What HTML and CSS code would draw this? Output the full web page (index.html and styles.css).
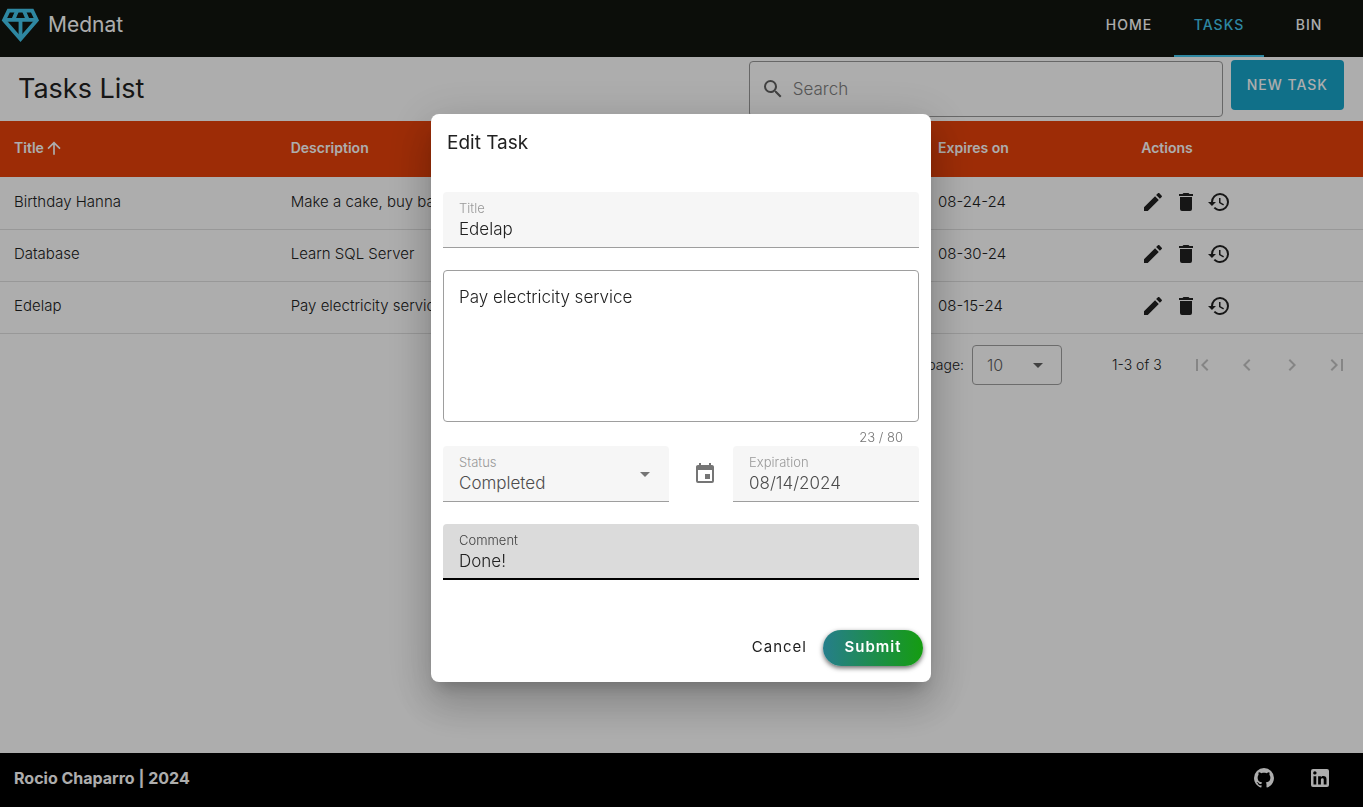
FILE: index.html
```html
<!DOCTYPE html>
<html lang="en">
<head>
<meta charset="utf-8">
<title>Mednat - Tasks</title>
<meta name="viewport" content="width=device-width, initial-scale=1">
<link rel="stylesheet" href="styles.css">
</head>
<body>
<svg class="defs" aria-hidden="true">
  <symbol id="pencil" viewBox="0 0 24 24"><path d="M20.71,7.04C21.1,6.65 21.1,6 20.71,5.63L18.37,3.29C18,2.9 17.35,2.9 16.96,3.29L15.12,5.12L18.87,8.87M3,17.25V21H6.75L17.81,9.93L14.06,6.18L3,17.25Z"/></symbol>
  <symbol id="trash" viewBox="0 0 24 24"><path d="M19,4H15.5L14.5,3H9.5L8.5,4H5V6H19M6,19A2,2 0 0,0 8,21H16A2,2 0 0,0 18,19V7H6V19Z"/></symbol>
  <symbol id="history" viewBox="0 0 24 24"><path d="M13.5,8H12V13L16.28,15.54L17,14.33L13.5,12.25V8M13,3A9,9 0 0,0 4,12H1L4.96,16.03L9,12H6A7,7 0 0,1 13,5A7,7 0 0,1 20,12A7,7 0 0,1 13,19C11.07,19 9.32,18.21 8.06,16.94L6.64,18.36C8.27,20 10.5,21 13,21A9,9 0 0,0 22,12A9,9 0 0,0 13,3"/></symbol>
  <symbol id="caret" viewBox="0 0 24 24"><path d="M7,10L12,15L17,10H7Z"/></symbol>
</svg>

<div class="app">
  <header class="topbar">
    <a class="brand" href="#">
      <svg class="brand-mark" viewBox="0 0 40 40" aria-hidden="true"><g fill="none" stroke="currentColor" stroke-width="3.8"><path d="M8.6 5.7H32.2L36.8 15.2L20.5 34L4 15.2Z"/><path d="M4 14.8H37M20.5 15V34M17 6L13.2 15M24 6L27.8 15"/></g></svg>
      <span>Mednat</span>
    </a>
    <nav class="tabs">
      <a class="tab" href="#home">Home</a>
      <a class="tab active" href="#tasks">Tasks</a>
      <a class="tab" href="#bin">Bin</a>
    </nav>
  </header>

  <main class="content">
    <div class="toolbar">
      <h1 class="page-title">Tasks List</h1>
      <label class="search">
        <svg class="icon" viewBox="0 0 24 24" aria-hidden="true"><path d="M9.5,3A6.5,6.5 0 0,1 16,9.5C16,11.11 15.41,12.59 14.44,13.73L14.71,14H15.5L20.5,19L19,20.5L14,15.5V14.71L13.73,14.44C12.59,15.41 11.11,16 9.5,16A6.5,6.5 0 0,1 3,9.5A6.5,6.5 0 0,1 9.5,3M9.5,5C7,5 5,7 5,9.5C5,12 7,14 9.5,14C12,14 14,12 14,9.5C14,7 12,5 9.5,5Z"/></svg>
        <input class="search-input" type="search" placeholder="Search" aria-label="Search">
      </label>
      <button class="new-task" type="button">New Task</button>
    </div>

    <table class="tasks">
      <thead>
        <tr>
          <th class="col-title"><span class="sort">Title <svg viewBox="0 0 24 24" aria-hidden="true"><path d="M13,20H11V8L5.5,13.5L4.08,12.08L12,4.16L19.92,12.08L18.5,13.5L13,8V20Z"/></svg></span></th>
          <th class="col-description">Description</th>
          <th class="col-status"></th>
          <th class="col-expires">Expires on</th>
          <th>Actions</th>
        </tr>
      </thead>
      <tbody>
        <tr>
          <td>Birthday Hanna</td><td>Make a cake, buy bags</td><td></td><td>08-24-24</td>
          <td><div class="actions"><button type="button" aria-label="Edit"><svg class="icon"><use href="#pencil"/></svg></button><button type="button" aria-label="Delete"><svg class="icon"><use href="#trash"/></svg></button><button type="button" aria-label="History"><svg class="icon"><use href="#history"/></svg></button></div></td>
        </tr>
        <tr>
          <td>Database</td><td>Learn SQL Server</td><td></td><td>08-30-24</td>
          <td><div class="actions"><button type="button" aria-label="Edit"><svg class="icon"><use href="#pencil"/></svg></button><button type="button" aria-label="Delete"><svg class="icon"><use href="#trash"/></svg></button><button type="button" aria-label="History"><svg class="icon"><use href="#history"/></svg></button></div></td>
        </tr>
        <tr>
          <td>Edelap</td><td>Pay electricity service</td><td></td><td>08-15-24</td>
          <td><div class="actions"><button type="button" aria-label="Edit"><svg class="icon"><use href="#pencil"/></svg></button><button type="button" aria-label="Delete"><svg class="icon"><use href="#trash"/></svg></button><button type="button" aria-label="History"><svg class="icon"><use href="#history"/></svg></button></div></td>
        </tr>
      </tbody>
    </table>

    <div class="pagination">
      <label for="per-page">Items per page:</label>
      <div class="per-page">
        <select id="per-page"><option>10</option><option>25</option></select>
        <svg class="icon caret" aria-hidden="true"><use href="#caret"/></svg>
      </div>
      <span class="range">1-3 of 3</span>
      <div class="pager">
        <button type="button" disabled aria-label="First page"><svg class="icon" viewBox="0 0 24 24"><path d="M18.41,16.59L13.82,12L18.41,7.41L17,6L11,12L17,18L18.41,16.59M6,6H8V18H6V6Z"/></svg></button>
        <button type="button" disabled aria-label="Previous page"><svg class="icon" viewBox="0 0 24 24"><path d="M15.41,16.58L10.83,12L15.41,7.41L14,6L8,12L14,18L15.41,16.58Z"/></svg></button>
        <button type="button" disabled aria-label="Next page"><svg class="icon" viewBox="0 0 24 24"><path d="M8.59,16.58L13.17,12L8.59,7.41L10,6L16,12L10,18L8.59,16.58Z"/></svg></button>
        <button type="button" disabled aria-label="Last page"><svg class="icon" viewBox="0 0 24 24"><path d="M5.59,7.41L10.18,12L5.59,16.59L7,18L13,12L7,6L5.59,7.41M16,6H18V18H16V6Z"/></svg></button>
      </div>
    </div>
  </main>

  <footer class="footer">
    <span>Rocio Chaparro | 2024</span>
    <div class="social">
      <a href="#github" aria-label="GitHub"><svg class="icon" viewBox="0 0 24 24"><path d="M12,2A10,10 0 0,0 2,12C2,16.42 4.87,20.17 8.84,21.5C9.34,21.58 9.5,21.27 9.5,21C9.5,20.77 9.5,20.14 9.5,19.31C6.73,19.91 6.14,17.97 6.14,17.97C5.68,16.81 5.03,16.5 5.03,16.5C4.12,15.88 5.1,15.9 5.1,15.9C6.1,15.97 6.63,16.93 6.63,16.93C7.5,18.45 8.97,18 9.54,17.76C9.63,17.11 9.89,16.67 10.17,16.42C7.95,16.17 5.62,15.31 5.62,11.5C5.62,10.39 6,9.5 6.65,8.79C6.55,8.54 6.2,7.5 6.75,6.15C6.75,6.15 7.59,5.88 9.5,7.17C10.29,6.95 11.15,6.84 12,6.84C12.85,6.84 13.71,6.95 14.5,7.17C16.41,5.88 17.25,6.15 17.25,6.15C17.8,7.5 17.45,8.54 17.35,8.79C18,9.5 18.38,10.39 18.38,11.5C18.38,15.32 16.04,16.16 13.81,16.41C14.17,16.72 14.5,17.33 14.5,18.26C14.5,19.6 14.5,20.68 14.5,21C14.5,21.27 14.66,21.59 15.17,21.5C19.14,20.16 22,16.42 22,12A10,10 0 0,0 12,2Z"/></svg></a>
      <a href="#linkedin" aria-label="LinkedIn"><svg class="icon" viewBox="0 0 24 24"><path d="M19 3A2 2 0 0 1 21 5V19A2 2 0 0 1 19 21H5A2 2 0 0 1 3 19V5A2 2 0 0 1 5 3H19M18.5 18.5V13.2A3.26 3.26 0 0 0 15.24 9.94C14.39 9.94 13.4 10.46 12.92 11.24V10.13H10.13V18.5H12.92V13.57C12.92 12.8 13.54 12.17 14.31 12.17A1.4 1.4 0 0 1 15.71 13.57V18.5H18.5M6.88 8.56A1.68 1.68 0 0 0 8.56 6.88C8.56 5.95 7.81 5.19 6.88 5.19A1.69 1.69 0 0 0 5.19 6.88C5.19 7.81 5.95 8.56 6.88 8.56M8.27 18.5V10.13H5.5V18.5H8.27Z"/></svg></a>
    </div>
  </footer>
</div>

<div class="scrim">
  <form class="dialog" role="dialog" aria-labelledby="dialog-title">
    <h2 class="dialog-title" id="dialog-title">Edit Task</h2>
    <div class="fields">
      <div class="field">
        <label for="title">Title</label>
        <input id="title" type="text" value="Edelap">
      </div>
      <div>
        <textarea class="description" aria-label="Description">Pay electricity service</textarea>
        <div class="counter">23 / 80</div>
        <div class="row">
          <div class="field muted">
            <label for="status">Status</label>
            <select id="status"><option>Completed</option><option>Pending</option></select>
            <svg class="icon caret" aria-hidden="true"><use href="#caret"/></svg>
          </div>
          <svg class="icon calendar" viewBox="0 0 24 24" aria-hidden="true"><path d="M19,19H5V8H19M16,1V3H8V1H6V3H5C3.89,3 3,3.89 3,5V19A2,2 0 0,0 5,21H19A2,2 0 0,0 21,19V5C21,3.89 20.1,3 19,3H18V1M17,12H12V17H17V12Z"/></svg>
          <div class="field muted">
            <label for="expiration">Expiration</label>
            <input id="expiration" type="text" value="08/14/2024">
          </div>
        </div>
      </div>
      <div class="field focused">
        <label for="comment">Comment</label>
        <input id="comment" type="text" value="Done!">
      </div>
    </div>
    <div class="dialog-actions">
      <button class="cancel" type="button">Cancel</button>
      <button class="submit" type="submit">Submit</button>
    </div>
  </form>
</div>
</body>
</html>
```

FILE: styles.css
```css
* { box-sizing: border-box; }

body {
  margin: 0;
  background: #fff;
  color: #212121;
  font: 300 14px/20px Inter, "Open Sans", sans-serif;
}

button, input, select, textarea { font: inherit; color: inherit; }
button { padding: 0; border: 0; background: none; cursor: pointer; }
a { color: inherit; text-decoration: none; }

.defs { display: none; }
.icon { display: block; flex: none; width: 24px; height: 24px; fill: currentColor; }

.app { display: flex; flex-direction: column; min-height: 100vh; }

/* Top bar */
.topbar {
  display: flex;
  justify-content: space-between;
  height: 57px;
  background: #12160f;
  color: #fff;
}
.brand {
  display: flex;
  align-items: center;
  gap: 8px;
  height: 50px;
  font-size: 21px;
  font-weight: 400;
}
.brand-mark { width: 40px; height: 40px; color: #44c8ee; }
.tabs { display: flex; padding-right: 9px; }
.tab {
  display: flex;
  align-items: center;
  justify-content: center;
  min-width: 90px;
  padding: 0 16px 5px;
  border-bottom: 2px solid transparent;
  font-weight: 500;
  letter-spacing: 1px;
  text-transform: uppercase;
}
.tab.active { color: #44c8ee; border-color: #44c8ee; }

/* Toolbar */
.content { flex: 1; }
.toolbar {
  display: grid;
  grid-template-columns: 61fr 40fr auto;
  column-gap: 8px;
  height: 64px;
  padding: 3px 19px 0 18px;
}
.page-title {
  margin: 0;
  padding-top: 9px;
  font-size: 27px;
  line-height: 40px;
  font-weight: 400;
}
.search {
  display: flex;
  align-items: center;
  gap: 6px;
  height: 56px;
  margin-top: 1px;
  padding: 0 11px;
  border: 1px solid #999;
  border-radius: 4px;
  color: #616161;
}
.search-input {
  flex: 1;
  min-width: 0;
  border: 0;
  outline: 0;
  background: none;
  font-size: 17px;
}
.search-input::placeholder { color: #808080; opacity: 1; }
.new-task {
  height: 50px;
  padding: 0 16px;
  border-radius: 4px;
  background: #19a5cb;
  color: #fff;
  font-weight: 500;
  letter-spacing: 1px;
  text-transform: uppercase;
}

/* Table */
.tasks { width: 100%; border-collapse: collapse; table-layout: fixed; }
.tasks th, .tasks td { padding: 0 14px 2px; text-align: left; white-space: nowrap; }
.tasks th { height: 56px; background: #e7420a; color: #fff; font-weight: 600; }
.tasks td { height: 52px; border-bottom: 1px solid #e0e0e0; font-size: 15px; }
.col-title { width: 20.3%; }
.col-description { width: 30%; }
.col-status { width: 17.5%; }
.col-expires { width: 14.9%; }
.sort { display: flex; align-items: center; }
.sort svg { width: 20px; height: 20px; fill: currentColor; }
.actions { display: flex; gap: 9px; }

/* Pagination */
.pagination {
  display: flex;
  align-items: center;
  justify-content: flex-end;
  padding: 11px 14px 12px 0;
}
.per-page { position: relative; width: 90px; margin-left: 8px; color: #616161; }
.per-page select {
  width: 100%;
  height: 40px;
  padding: 0 14px;
  border: 1px solid #a0a0a0;
  border-radius: 4px;
  background: none;
  appearance: none;
  font-size: 16px;
}
.caret { position: absolute; right: 12px; top: 8px; pointer-events: none; }
.range { width: 50px; margin-left: 50px; white-space: nowrap; }
.pager { display: flex; gap: 21px; margin-left: 28px; color: #c4c4c4; }

/* Footer */
.footer {
  display: flex;
  align-items: center;
  justify-content: space-between;
  height: 54px;
  padding: 0 31px 5px 14px;
  background: #000;
  color: #fff;
  font-size: 16px;
  font-weight: 700;
}
.social { display: flex; gap: 32px; }

/* Dialog */
.scrim {
  position: fixed;
  inset: 0;
  display: flex;
  align-items: center;
  justify-content: center;
  padding: 0 1px 11px 0;
  background: rgba(0, 0, 0, 0.32);
}
.dialog {
  width: 500px;
  max-width: 100%;
  border-radius: 8px;
  background: #fff;
  box-shadow: 0 11px 15px -7px rgba(0, 0, 0, 0.2), 0 24px 38px 3px rgba(0, 0, 0, 0.14), 0 9px 46px 8px rgba(0, 0, 0, 0.12);
}
.dialog-title {
  margin: 0;
  padding: 16px 16px 0;
  font-size: 19px;
  line-height: 26px;
  font-weight: 400;
}
.fields { display: flex; flex-direction: column; gap: 22px; padding: 36px 12px 0; }
.field {
  position: relative;
  min-width: 0;
  height: 56px;
  padding: 8px 16px 0;
  border-bottom: 1px solid #9e9e9e;
  border-radius: 4px 4px 0 0;
  background: #f6f6f6;
}
.field label { display: block; color: #999; font-size: 13px; line-height: 16px; }
.field input, .field select {
  display: block;
  width: 100%;
  height: 26px;
  padding: 0;
  border: 0;
  outline: 0;
  background: none;
  appearance: none;
  font-size: 17px;
}
.field .caret { top: 16px; color: #757575; }
.field.muted input, .field.muted select { color: #4d4d4d; }
.field.focused { border-bottom: 2px solid #000; background: #dbdbdb; }
.field.focused label { color: #424242; }
.description {
  display: block;
  width: 100%;
  height: 152px;
  padding: 14px 15px;
  border: 1px solid #9e9e9e;
  border-radius: 4px;
  outline: 0;
  background: none;
  resize: none;
  font-size: 17px;
  line-height: 24px;
}
.counter {
  padding: 7px 16px 1px;
  color: #757575;
  font-size: 13px;
  line-height: 16px;
  text-align: right;
}
.row { display: grid; grid-template-columns: 226fr 64px 186fr; align-items: center; }
.calendar { margin-left: 24px; color: #757575; }
.dialog-actions {
  display: flex;
  justify-content: flex-end;
  gap: 16px;
  padding: 50px 8px 16px;
}
.cancel, .submit { height: 36px; padding-bottom: 2px; font-size: 15px; letter-spacing: 1px; }
.cancel { font-weight: 400; }
.submit {
  width: 100px;
  border-radius: 18px;
  background: linear-gradient(to right, #267e8b, #159c11);
  box-shadow: 0 2px 5px rgba(0, 0, 0, 0.6);
  color: #fff;
  font-weight: 600;
}
```
